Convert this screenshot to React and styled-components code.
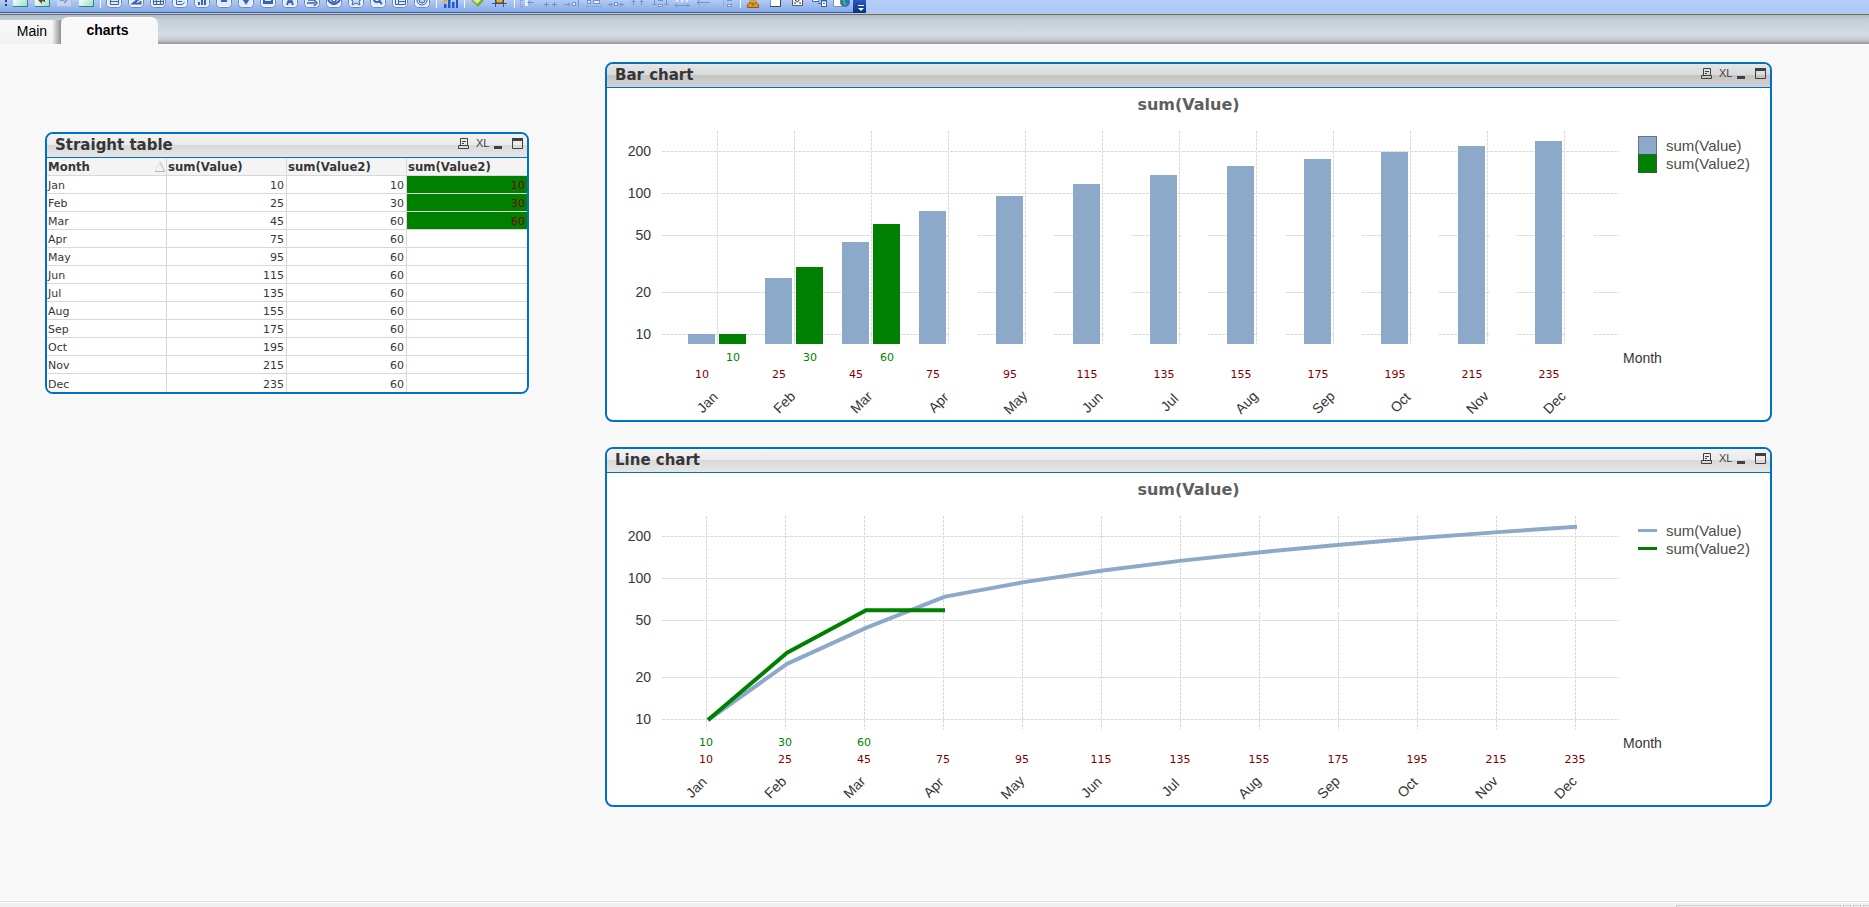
import React from 'react';
import styled, { createGlobalStyle } from 'styled-components'

const MONTHS = ['Jan', 'Feb', 'Mar', 'Apr', 'May', 'Jun', 'Jul', 'Aug', 'Sep', 'Oct', 'Nov', 'Dec']
const VALUE = [10, 25, 45, 75, 95, 115, 135, 155, 175, 195, 215, 235]
const VALUE2 = [10, 30, 60, 60, 60, 60, 60, 60, 60, 60, 60, 60]
const TICKS = [200, 100, 50, 20, 10]
// value2 stops being highlighted after march
const LAST_SHOWN = 3

const BLUE = '#8da9c9'
const GREEN = '#008000'
const RED = '#800000'

const scaleY = v => 206 - 141 * Math.log10(v / 10)

const ToolIcon = ({ label, children }) => (
    <ToolButton type="button" aria-label={label}>
        <svg width="22" height="13" viewBox="0 0 22 13">{children}</svg>
    </ToolButton>
)

const NavIcon = ({ label, faded, children }) => (
    <ToolIcon label={label}>
        <rect x="4" y="-8" width="15" height="15" fill={faded ? '#a9bde2' : '#2d8a7b'} />
        <rect x="4" y="-8" width="14" height="14" fill={faded ? '#c3d3f0' : 'url(#nav)'} />
        {children}
    </ToolIcon>
)

const BoxIcon = ({ label, children }) => (
    <ToolIcon label={label}>
        <rect x="3.5" y="-8.5" width="15" height="16" rx="4" fill="#dfeafb" stroke="#6f86b5" />
        <rect x="4.5" y="-7.5" width="13" height="14" rx="3" fill="none" stroke="#f6faff" />
        <g stroke="#3a62b4" fill="none">{children}</g>
    </ToolIcon>
)

const BOX_ICONS = [
    ['List box', <path d="M7.5 -3V4.5H15.5V-3M7 1.5H16" />],
    ['Statistics box', <path d="M14 -1L8 3.5H15.5V1" strokeWidth="2" />],
    ['Table box', <path d="M6.5 -3V4.5H16.5V-3M6 1.5H17M9.5 -3V5M13.5 -3V5" />],
    ['Multi box', <path d="M7.5 -3V4.5H13L15.5 2.5M9 1.5H13M9 -.5H14" />],
    ['Chart', <path d="M8 5V2M11 5V0M14 5V-3" strokeWidth="2" />],
    ['Input box', <path d="M8 1H14" strokeWidth="2" />],
    ['Current selections', <path d="M9 0L11 3L13 0Z" fill="#3a62b4" strokeWidth="2" />],
    ['Button', <path d="M7 -1V3H15V-1M7 2H15" strokeWidth="2" />],
    ['Text object', <path d="M8 5L11 -3L14 5M9 2H13" strokeWidth="2" />],
    ['Line or arrow', <path d="M6 3H14M13 0L16 3L13 6M7 0H13" strokeWidth="1.5" />],
    ['Slider', <><path d="M5 0Q11 8 17 0" strokeWidth="2" /><circle cx="11" cy="0" r="2" fill="#fff" strokeWidth="1.5" /></>],
    ['Bookmark', <path d="M5 -1L8 1L7 5L11 3L15 5L14 1L17 -1" fill="#c8dcf8" />],
    ['Search', <><circle cx="10" cy="-1" r="3" fill="#fff" strokeWidth="2" /><path d="M12 1L15 4" strokeWidth="2" /></>],
    ['Container', <path d="M6.5 -3V4.5H16.5V-3M9.5 -3V5M10 1.5H16" />],
    ['Custom object', <><circle cx="11" cy="0" r="5" /><circle cx="11" cy="0" r="3" fill="#b9d2f5" /></>],
]

const ALIGN_ICONS = [
    ['Align left', <><path d="M3.5 0V7M5 .5H7M5 6.5H7" strokeDasharray="1 1" /><path d="M9.5 0V6" stroke="#e6eefb" strokeWidth="3" /><path d="M11 2.5H17M13 .5L11 2.5L13 4.5" /></>],
    ['Center horizontally', <><path d="M3 -1H9M12 -1H18" stroke="#e6eefb" strokeWidth="2" /><path d="M7.5 2V7M5 4.5H10M15.5 2V7M13 4.5H18" /></>],
    ['Align right', <><path d="M3 4.5H9M7 2.5L9 4.5L7 6.5M17.5 0V7" /><rect x="11.5" y="2.5" width="3" height="3" fill="#e6eefb" /></>],
    ['Align bottom', <><path d="M3 6.5H19" strokeDasharray="1 1" /><rect x="4.5" y=".5" width="3" height="3" fill="#e6eefb" /><rect x="10.5" y=".5" width="6" height="3" fill="#e6eefb" /></>],
    ['Center vertically', <><path d="M3 4.5H8M6 2.5V6.5M14 4.5H19M16 2.5V6.5" /><rect x="9.5" y="2.5" width="3" height="3" fill="#e6eefb" /></>],
    ['Align top', <path d="M6.5 5V-1M4.5 1.5H8.5M14.5 5V-1M12.5 1.5H16.5" />],
    ['Space vertically', <><path d="M5.5 -1V5M3.5 4.5H7.5M17.5 -1V5M15.5 4.5H19.5" /><rect x="9.5" y="-1.5" width="4" height="2" fill="#e6eefb" /><rect x="9.5" y="4.5" width="4" height="2" fill="#e6eefb" /></>],
    ['Space horizontally', <><path d="M4 5.5H18M6 3.5L4 5.5L6 7.5M16 3.5L18 5.5L16 7.5" /><path d="M5 0H7M10 0H12M15 0H17" stroke="#e6eefb" strokeWidth="4" /></>],
    ['Adjust left', <path d="M4 2.5H17M7 0L4 2.5L7 5" />],
    ['Adjust top', <><path d="M8.5 -1V7" strokeDasharray="1 1" /><rect x="12.5" y="-2.5" width="4" height="3" fill="#e6eefb" /><rect x="12.5" y="4.5" width="4" height="2" fill="#e6eefb" /></>],
]

const Toolbar = () => (
    <ToolbarRow>
        <Grip />
        <svg width="0" height="0">
            <linearGradient id="nav" x1="0" y1="0" x2="1" y2="1">
                <stop offset="0.3" stopColor="#f4fffc" />
                <stop offset="1" stopColor="#9bdccf" />
            </linearGradient>
        </svg>
        <NavIcon label="New" />
        <NavIcon label="Back"><path d="M7 0L11 -4V4ZM11 -1H14V2L11 1Z" fill="#6b4a10" /></NavIcon>
        <NavIcon label="Forward" faded><path d="M15 0L11 -4V4ZM7 -1H12V1H7Z" fill="#8398cc" /></NavIcon>
        <NavIcon label="Clear" />
        <Separator />
        {BOX_ICONS.map(([label, icon]) => <BoxIcon key={label} label={label}>{icon}</BoxIcon>)}
        <Separator />
        <ToolIcon label="Quick chart">
            <path d="M5 8V4H7V8ZM9 8V0H11V8ZM13 8V2H15V8ZM17 8V-2H19V8Z" fill="#2456c4" />
            <path d="M7.5 8V4M11.5 8V0M15.5 8V2" stroke="#5c8fe6" />
            <path d="M4 3L9 -2" stroke="#e8a71c" strokeWidth="2" />
        </ToolIcon>
        <Separator />
        <ToolIcon label="Format painter">
            <path d="M4 0L11 7L18 -1V-4H4Z" fill="#74a834" />
            <path d="M6 0L10 4L16 -2Z" fill="#d6ec90" />
        </ToolIcon>
        <ToolIcon label="Design grid">
            <path d="M3 3.5H18M6.5 -1V7M14.5 -1V7" stroke="#34589b" />
            <rect x="7" y="-2" width="7" height="5" fill="#eeb13a" stroke="#4a3b20" />
        </ToolIcon>
        <Separator />
        {ALIGN_ICONS.map(([label, icon]) => (
            <ToolIcon key={label} label={label}><g fill="none" stroke="#7890c4">{icon}</g></ToolIcon>
        ))}
        <Separator />
        <ToolIcon label="User preferences">
            <path d="M4.5 7.5V5L7 2H13L15.5 5V7.5Z" fill="#f08a24" stroke="#a4500c" />
            <path d="M7 2L10 6L13 2Z" fill="#35a03c" />
            <circle cx="10" cy="-1" r="4" fill="#e69c3c" />
        </ToolIcon>
        <ToolIcon label="Document properties">
            <path d="M5.5 -4V6.5H15.5V-4" fill="#fff" stroke="#8494b4" />
            <path d="M5 6.5H15.5V-4" fill="none" stroke="#3c4660" />
        </ToolIcon>
        <ToolIcon label="Sheet properties">
            <path d="M5.5 -4V5.5H15.5V-4" fill="#fff" stroke="#4c5a7c" />
            <path d="M8 0L10.5 2L13 -1M7 3H9M12 3H14" fill="none" stroke="#222" />
        </ToolIcon>
        <ToolIcon label="Table viewer">
            <path d="M3.5 -2V1.5H10V-2" fill="#fff" stroke="#3e62ac" />
            <rect x="12.5" y=".5" width="5" height="6" fill="#fff" stroke="#3e62ac" />
            <path d="M12 1H18M14 3.5H16M9 3.5H12" stroke="#3e62ac" />
        </ToolIcon>
        <ToolIcon label="Web view">
            <path d="M2.5 -4V6.5H12V-4" fill="#fff" stroke="#8494b4" />
            <circle cx="14" cy="2" r="5" fill="#2c70d0" />
            <path d="M11 -1L15 -2L14 2L16 4L13 6L12 2Z" fill="#52b244" />
        </ToolIcon>
        <Overflow type="button" aria-label="Toolbar options">
            <svg width="11" height="12" viewBox="0 0 11 12">
                <path d="M1 4.5H7" stroke="#fff" />
                <path d="M1 7H7L4 10Z" fill="#fff" />
            </svg>
        </Overflow>
    </ToolbarRow>
)

const Panel = ({ title, active, children, className }) => (
    <Frame className={className}>
        <Caption $active={active}>
            <CaptionTitle>{title}</CaptionTitle>
            <CaptionButton type="button" aria-label="Print">
                <svg width="11" height="11" viewBox="0 0 11 11" fill="none" stroke="#404040">
                    <path d="M2.5 7.5V.5H9.5V7.5M.5 7.5H10.5V10.5H.5ZM4 3.5H8M4 5.5H6" />
                </svg>
            </CaptionButton>
            <CaptionButton type="button">XL</CaptionButton>
            <CaptionButton type="button" aria-label="Minimize">
                <svg width="11" height="11" viewBox="0 0 11 11"><rect y="8" width="8" height="3" fill="#404040" /></svg>
            </CaptionButton>
            <CaptionButton type="button" aria-label="Maximize">
                <svg width="11" height="11" viewBox="0 0 11 11">
                    <path d="M.5 .5H10.5V10.5H.5Z" fill="none" stroke="#404040" />
                    <rect width="11" height="3" fill="#404040" />
                </svg>
            </CaptionButton>
        </Caption>
        {children}
    </Frame>
)

const StraightTable = () => (
    <Table>
        <thead>
            <tr>
                <HeadCell>
                    <HeadSort>
                        Month
                        <svg width="12" height="12" viewBox="0 0 12 12">
                            <path d="M1 10.5L6 1" stroke="#dcdcdc" fill="none" />
                            <path d="M6 1L10.5 10.5H1" stroke="#b4b4b4" fill="none" />
                        </svg>
                    </HeadSort>
                </HeadCell>
                <HeadCell>sum(Value)</HeadCell>
                <HeadCell>sum(Value2)</HeadCell>
                <HeadCell>sum(Value2)</HeadCell>
            </tr>
        </thead>
        <tbody>
            {MONTHS.map((month, i) => (
                <tr key={month}>
                    <Cell>{month}</Cell>
                    <Cell $num>{VALUE[i]}</Cell>
                    <Cell $num>{VALUE2[i]}</Cell>
                    <Cell $num $marked={i < LAST_SHOWN}>{i < LAST_SHOWN ? VALUE2[i] : ''}</Cell>
                </tr>
            ))}
        </tbody>
    </Table>
)

const Grid = ({ start, step }) => (
    <g>
        {TICKS.map(t => {
            const y = Math.round(scaleY(t))
            return (
                <g key={t}>
                    <GridLine d={`M55 ${y + 0.5}H1012`} />
                    <AxisText x="44" y={y + 5} textAnchor="end">{t}</AxisText>
                </g>
            )
        })}
        {MONTHS.map((m, i) => <GridLine key={m} d={`M${start + step * i + 0.5} 3V216`} />)}
    </g>
)

const MonthLabels = ({ start, step }) => MONTHS.map((m, i) => (
    <AxisText key={m} textAnchor="middle" transform={`translate(${start + step * i} 275) rotate(-45)`} y="4">{m}</AxisText>
))

const BarPlot = () => (
    <Plot viewBox="0 0 1013 292">
        <Grid start={110} step={77} />
        {MONTHS.map((m, i) => {
            const top = Math.round(scaleY(VALUE[i]))
            const top2 = Math.round(scaleY(VALUE2[i]))
            const shown = i < LAST_SHOWN
            return (
                <g key={m}>
                    <rect x={81 + 77 * i} y={top} width="27" height={216 - top} fill={BLUE} />
                    <rect x={112 + 77 * i} y={top2} width="27" height={216 - top2} fill={shown ? GREEN : '#fff'} />
                    {shown && <ValueText x={126 + 77 * i} y="233" fill={GREEN}>{VALUE2[i]}</ValueText>}
                    <ValueText x={95 + 77 * i} y="250" fill={RED}>{VALUE[i]}</ValueText>
                </g>
            )
        })}
        <MonthLabels start={101} step={77} />
    </Plot>
)

const linePoints = (values, from = 0) =>
    values.map((v, i) => `${101 + 79 * (i + from)},${scaleY(v) + 1}`).join(' ')

const LinePlot = () => (
    <Plot viewBox="0 0 1013 292">
        <Grid start={99} step={79} />
        <Series points={linePoints(VALUE2.slice(LAST_SHOWN), LAST_SHOWN)} stroke="#fff" />
        <Series points={linePoints(VALUE)} stroke={BLUE} />
        <Series points={linePoints(VALUE2.slice(0, LAST_SHOWN + 1))} stroke={GREEN} />
        {MONTHS.map((m, i) => (
            <g key={m}>
                {i < LAST_SHOWN && <ValueText x={99 + 79 * i} y="233" fill={GREEN}>{VALUE2[i]}</ValueText>}
                <ValueText x={99 + 79 * i} y="250" fill={RED}>{VALUE[i]}</ValueText>
            </g>
        ))}
        <MonthLabels start={90} step={79} />
    </Plot>
)

const Chart = ({ line, children }) => (
    <>
        <ChartTitle>sum(Value)</ChartTitle>
        <ChartBody>
            {children}
            <Side>
                <Legend>
                    <LegendItem><Swatch $line={line} $color={BLUE} />sum(Value)</LegendItem>
                    <LegendItem><Swatch $line={line} $color={GREEN} />sum(Value2)</LegendItem>
                </Legend>
                <AxisTitle>Month</AxisTitle>
            </Side>
        </ChartBody>
    </>
)

const App = () => (
    <Page>
        <GlobalStyle />
        <Toolbar />
        <Tabs>
            <Tab href="#main">Main</Tab>
            <Tab href="#charts" $active>charts</Tab>
        </Tabs>
        <Sheet>
            <TablePanel title="Straight table">
                <StraightTable />
            </TablePanel>
            <Charts>
                <Panel title="Bar chart" active>
                    <Chart><BarPlot /></Chart>
                </Panel>
                <Panel title="Line chart">
                    <Chart line><LinePlot /></Chart>
                </Panel>
            </Charts>
        </Sheet>
        <StatusBar>
            <StatusBox $width={165} />
            <StatusBox $width={8} />
            <StatusBox $width={8} />
            <StatusBox $width={6} />
        </StatusBar>
    </Page>
)

const GlobalStyle = createGlobalStyle`
    * {
        box-sizing: border-box;
    }
    body {
        margin: 0;
        font-family: "Liberation Sans", Arial, sans-serif;
        font-size: 14px;
        color: #363636;
        background: #f8f8f8;
    }
    button {
        padding: 0;
        border: 0;
        background: none;
        font: inherit;
        color: inherit;
    }
    svg {
        display: block;
    }
`
const Page = styled.div`
    display: flex;
    flex-direction: column;
    height: 100vh;
    overflow: hidden;
`
const ToolbarRow = styled.div`
    display: flex;
    flex: none;
    height: 15px;
    overflow: hidden;
    background: linear-gradient(#b4cdf8, #adc8f6 13px, #c3cad2 13px, #c3cad2 14px, #716c6b 14px);
`
const toolbarBlue = 'linear-gradient(#b3cbf5, #84a9e6 12px, #2d5faf 12px, #2d5faf 13px, transparent 13px)'
const Grip = styled.div`
    width: 9px;
    background:
        repeating-linear-gradient(#27407c 0 2px, transparent 2px 4px) 5px 0 / 2px 7px no-repeat,
        ${toolbarBlue};
`
const ToolButton = styled.button`
    display: flex;
    flex: none;
    width: 22px;
    height: 15px;
    background: ${toolbarBlue};
`
const Separator = styled.div`
    width: 6px;
    background: linear-gradient(#f4f8ff, #f4f8ff) 3px 0 / 1px 8px no-repeat, ${toolbarBlue};
`
const Overflow = styled.button`
    width: 13px;
    height: 13px;
    padding-left: 4px;
    background: linear-gradient(#2a5cc0, #0b2f86);
`
const Tabs = styled.nav`
    display: flex;
    flex: none;
    align-items: flex-end;
    height: 29px;
    background: linear-gradient(#aebcc4, #c2cfd6 5px, #d4dbe4 20px, #c3c9ce 25px, #90979a 29px);
`
const Tab = styled.a`
    display: flex;
    align-items: center;
    justify-content: center;
    width: ${p => p.$active ? '97px' : '61px'};
    height: ${p => p.$active ? '27px' : '24px'};
    padding-right: ${p => p.$active ? '4px' : '0'};
    padding-left: ${p => p.$active ? '0' : '3px'};
    padding-bottom: 2px;
    border-radius: ${p => p.$active ? '7px 7px 0 0' : '0'};
    font-weight: ${p => p.$active ? 'bold' : 'normal'};
    background: ${p => p.$active ? '#f8f8f8' : 'linear-gradient(90deg, transparent 52px, #8d8d8d), linear-gradient(#f8f8f8, #f2f2f2)'};
    color: #000;
    text-decoration: none;
`
const Sheet = styled.main`
    display: flex;
    flex: 1;
    align-items: flex-start;
    gap: 76px;
    min-height: 0;
    padding: 18px 97px 0 45px;
`
const Frame = styled.section`
    overflow: hidden;
    border: 2px solid #0070c0;
    border-radius: 8px;
    background: #fff;
`
const TablePanel = styled(Panel)`
    flex: none;
    width: 484px;
    margin-top: 70px;
`
const Charts = styled.div`
    display: flex;
    flex: 1;
    flex-direction: column;
    gap: 25px;
    min-width: 0;
`
const Caption = styled.header`
    display: flex;
    gap: 7px;
    height: 24px;
    padding: 4px 4px 0 8px;
    border-bottom: 1px solid #0070c0;
    background: ${p => p.$active
        ? 'linear-gradient(#e6e6e6, #d9d9d9 11px, #c4c4c4 11px, #d2d2d2)'
        : 'linear-gradient(#f3f3f3, #eaeaea 11px, #d8d8d8 11px, #e6e6e6)'};
`
const CaptionTitle = styled.h2`
    flex: 1;
    margin: 0;
    font: bold 15px/15px "DejaVu Sans", Verdana, sans-serif;
`
const CaptionButton = styled.button`
    flex: none;
    width: 11px;
    height: 11px;
    font-size: 11px;
    line-height: 11px;
    color: #404040;
`
const Table = styled.table`
    width: 100%;
    table-layout: fixed;
    border-collapse: separate;
    border-spacing: 0;
    font: 11px/15px "DejaVu Sans", Verdana, sans-serif;
`
const Cell = styled.td`
    height: 18px;
    padding: 2px 2px 0 1px;
    border-right: 1px solid #d8d8d8;
    border-bottom: 1px solid #d8d8d8;
    text-align: ${p => p.$num ? 'right' : 'left'};
    background: ${p => p.$marked ? GREEN : '#fff'};
    color: ${p => p.$marked ? RED : 'inherit'};
    &:last-child {
        border-right: 0;
    }
    tr:last-child > & {
        border-bottom: 0;
    }
`
const HeadCell = styled.th`
    height: 18px;
    padding: 0 0 0 1px;
    border-right: 1px solid #d8d8d8;
    border-bottom: 1px solid #d8d8d8;
    font: bold 13px/17px "DejaVu Sans Condensed", "DejaVu Sans", sans-serif;
    text-align: left;
    background: #f4f4f4;
    &:last-child {
        border-right: 0;
    }
`
const HeadSort = styled.div`
    display: flex;
    align-items: center;
    justify-content: space-between;
`
const ChartTitle = styled.h3`
    height: 40px;
    margin: 0;
    font: bold 16px/34px "DejaVu Sans", Verdana, sans-serif;
    text-align: center;
    color: #5e5e5e;
`
const ChartBody = styled.div`
    display: flex;
`
const Plot = styled.svg`
    flex: 1;
    min-width: 0;
`
const GridLine = styled.path`
    stroke: #d9d9d9;
    stroke-dasharray: 3 1;
`
const AxisText = styled.text`
    font-size: 14px;
    fill: #363636;
`
const ValueText = styled.text`
    font: 11px "DejaVu Sans", Verdana, sans-serif;
    text-anchor: middle;
`
const Series = styled.polyline`
    fill: none;
    stroke-width: 4px;
    stroke-linejoin: round;
`
const Side = styled.div`
    display: flex;
    flex: none;
    flex-direction: column;
    justify-content: space-between;
    width: 150px;
`
const Legend = styled.ul`
    margin: 0;
    padding: 8px 0 0 18px;
    list-style: none;
`
const LegendItem = styled.li`
    display: flex;
    align-items: center;
    gap: 9px;
    height: 18px;
    font-size: 15px;
    color: #4c4c4c;
`
const Swatch = styled.span`
    width: 19px;
    height: ${p => p.$line ? '3px' : '19px'};
    border: ${p => p.$line ? '0' : '1px solid rgba(80, 80, 80, 0.6)'};
    background: ${p => p.$color};
`
const AxisTitle = styled.div`
    padding: 0 0 54px 3px;
    line-height: 16px;
`
const StatusBar = styled.footer`
    display: flex;
    flex: none;
    justify-content: flex-end;
    gap: 2px;
    height: 6px;
    padding-top: 3px;
    border-top: 1px solid #e0e0e0;
    box-shadow: inset 0 1px #fff;
    background: #f0f0f0;
`
const StatusBox = styled.div`
    width: ${p => p.$width}px;
    border: 1px solid #cfcfcf;
    border-bottom: 0;
    &:last-child {
        border-right: 0;
    }
`

export default App
